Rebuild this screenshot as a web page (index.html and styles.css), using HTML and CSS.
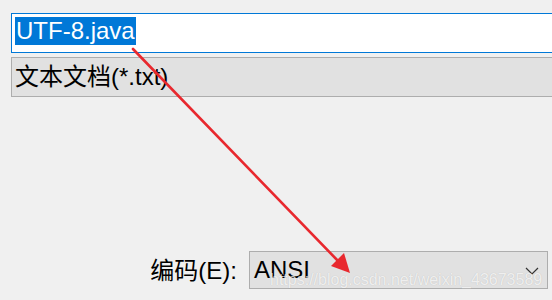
FILE: index.html
```html
<!DOCTYPE html>
<html lang="zh-CN">
<head>
<meta charset="utf-8">
<title>另存为</title>
<link rel="stylesheet" href="styles.css">
</head>
<body>
<div class="dialog">
  <div class="filename"><span class="sel">UTF-8.java</span></div>
  <div class="filetype">文本文档(*.txt)</div>
  <div class="encoding">
    <span class="label">编码(E):</span>
    <div class="combo">
      <span class="value">ANSI</span>
      <svg class="chevron" width="14" height="8" viewBox="0 0 14 8"><path d="M1 1 L7 7 L13 1" fill="none" stroke="#333" stroke-width="1.2"/></svg>
    </div>
  </div>
</div>
<svg class="arrow" width="552" height="300" viewBox="0 0 552 300">
  <line x1="133" y1="49" x2="340" y2="263" stroke="#e8282e" stroke-width="2.6" stroke-linecap="round"/>
  <polygon points="350,273 331,266 344,253" fill="#e8282e"/>
</svg>
<div class="watermark">https://blog.csdn.net/weixin_43673589</div>
</body>
</html>
```
FILE: styles.css
```css
html, body {
  margin: 0;
  padding: 0;
}
body {
  width: 552px;
  height: 300px;
  overflow: hidden;
  background: #f0f0f0;
  position: relative;
  font-family: "Liberation Sans", "Noto Sans CJK SC", sans-serif;
  font-size: 24px;
  color: #000;
}
.dialog {
  padding: 13px 0 0 11px;
}
.filename {
  box-sizing: border-box;
  width: 560px;
  height: 40px;
  border: 1px solid #0078d7;
  background: #fff;
  padding: 3px 3px;
  display: flex;
  align-items: flex-start;
}
.sel {
  background: #0078d7;
  color: #fff;
  line-height: 28px;
  height: 28px;
  padding: 0 1px 0 1px;
  white-space: nowrap;
}
.filetype {
  box-sizing: border-box;
  width: 560px;
  height: 40px;
  margin-top: 4px;
  border: 1px solid #adadad;
  background: #e1e1e1;
  padding-left: 3px;
  line-height: 37px;
  white-space: nowrap;
}
.encoding {
  margin-top: 154px;
  width: 537px;
  display: flex;
  justify-content: flex-end;
  align-items: center;
}
.label {
  margin-right: 12px;
  line-height: 37px;
  white-space: nowrap;
}
.combo {
  box-sizing: border-box;
  width: 299px;
  flex: none;
  height: 38px;
  border: 1px solid #adadad;
  background: #e1e1e1;
  padding-left: 4px;
  display: flex;
  align-items: center;
  justify-content: space-between;
  padding-right: 8px;
}
.value {
  line-height: 36px;
}
.chevron {
  display: block;
  margin-top: 2px;
}
.arrow {
  position: absolute;
  left: 0;
  top: 0;
  pointer-events: none;
}
.watermark {
  position: absolute;
  left: 270px;
  top: 271px;
  font-family: "Liberation Sans", sans-serif;
  font-size: 16px;
  line-height: 18px;
  color: rgba(255, 255, 255, 0.75);
  text-shadow: 0 0 1px rgba(0, 0, 0, 0.18);
  white-space: nowrap;
}
```
